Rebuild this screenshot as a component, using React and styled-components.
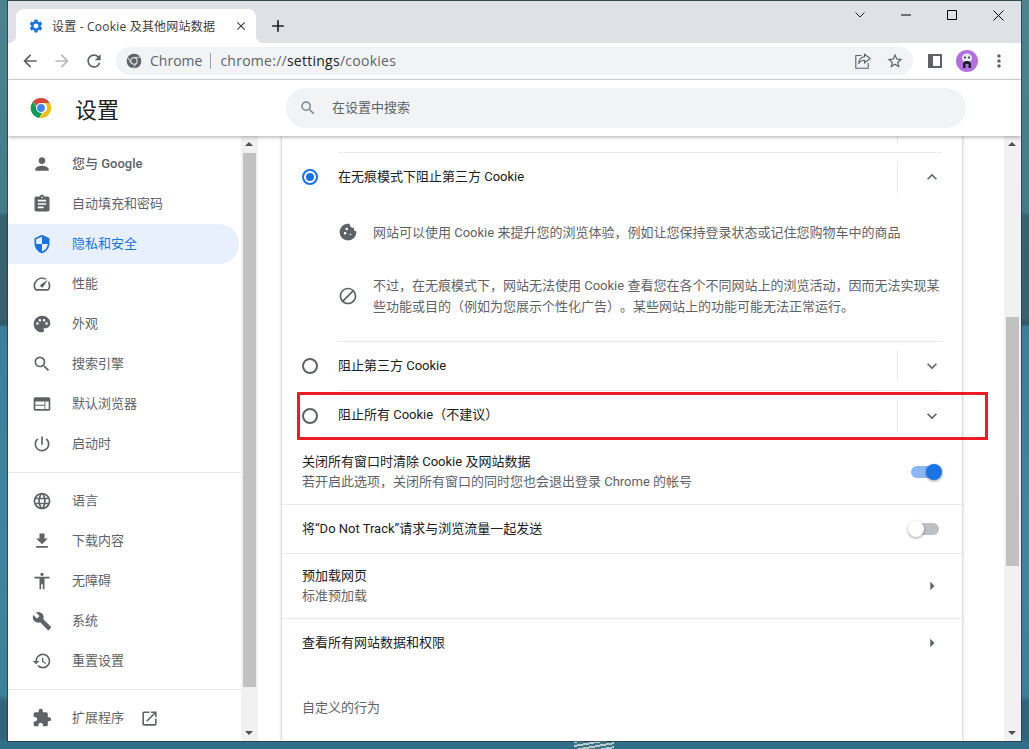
import React from "react";
import styled, { createGlobalStyle } from "styled-components";
import {
  MdPerson, MdAssignment, MdSecurity, MdSpeed, MdPalette, MdSearch, MdWeb,
  MdPowerSettingsNew, MdLanguage, MdFileDownload, MdAccessibility, MdBuild, MdRestore,
  MdExtension, MdOpenInNew, MdBlock, MdCookie, MdExpandLess, MdExpandMore, MdArrowRight,
  MdSettings, MdClose, MdAdd, MdArrowBack, MdArrowForward, MdRefresh, MdStarBorder, MdMoreVert,
} from "react-icons/md";

const Global = createGlobalStyle`
  html, body { margin: 0; padding: 0; height: 749px; overflow: hidden; }
  body {
    font-family: Roboto, "Noto Sans CJK SC", sans-serif;
    font-size: 13px;
    text-spacing-trim: space-all;
    background:
      repeating-linear-gradient(170deg, #b9cdd0 0 2px, #3f7488 2px 4px) 574px 741px / 40px 8px no-repeat,
      linear-gradient(180deg, #4b8491 0, #427c8b 212px, #37616f 216px, #38606f 318px, #2f5766 324px, #3b7f9b 327px, #40849f 560px, #3c8099 695px, #2f6479 702px, #2f6479 738px, #2f6f89 741px, #2f6f89 749px);
  }
  #root { height: 749px; }
`;

const Page = styled.div`
  padding: 1px 8px 8px;
  height: 749px;
  box-sizing: border-box;
`;
const Win = styled.div`
  position: relative;
  height: 740px;
  display: flex;
  flex-direction: column;
  background: #fff;
  overflow: hidden;
  box-shadow: 0 0 0 1px rgba(40, 55, 62, 0.75);
`;
const TabStrip = styled.div`
  height: 42px;
  flex: none;
  background: #dee1e6;
  display: flex;
  align-items: flex-end;
  padding-left: 8px;
`;
const Tab = styled.div`
  position: relative;
  width: 240px;
  height: 34px;
  box-sizing: border-box;
  background: #fff;
  border-radius: 8px 8px 0 0;
  display: flex;
  align-items: center;
  padding: 0 8px 0 12px;
  color: #3c4043;
  font-family: "Open Sans", "Noto Sans CJK SC", sans-serif;
  font-size: 12px;
  &::before, &::after {
    content: "";
    position: absolute;
    bottom: 0;
    width: 8px;
    height: 8px;
  }
  &::before { left: -8px; background: radial-gradient(circle at 0 0, transparent 8px, #fff 8.5px); }
  &::after { right: -8px; background: radial-gradient(circle at 100% 0, transparent 8px, #fff 8.5px); }
`;
const TabIcon = styled(MdSettings)`
  width: 16px;
  height: 16px;
  color: #1a73e8;
  flex: none;
  margin-right: 8px;
`;
const TabTitle = styled.span`
  flex: 1;
  white-space: nowrap;
  overflow: hidden;
  letter-spacing: 0.2px;
`;
const TabClose = styled(MdClose)`
  width: 14px;
  height: 14px;
  color: #3c4043;
  flex: none;
`;
const NewTab = styled(MdAdd)`
  width: 20px;
  height: 20px;
  color: #202124;
  margin: 0 0 7px 12px;
  flex: none;
`;
const WinControls = styled.div`
  margin-left: auto;
  align-self: flex-start;
  display: flex;
  height: 28px;
  align-items: center;
`;
const WinButton = styled.div`
  width: 46px;
  height: 28px;
  display: flex;
  align-items: center;
  justify-content: center;
  svg { display: block; }
`;
const Toolbar = styled.div`
  height: 37px;
  flex: none;
  display: flex;
  align-items: center;
  box-sizing: border-box;
  border-bottom: 1px solid #dadce0;
  padding: 0 6px;
`;
const NavButton = styled.div`
  width: 32px;
  height: 28px;
  display: flex;
  align-items: center;
  justify-content: center;
  color: ${(p) => (p.$dim ? "#b6b8bb" : "#5f6368")};
  svg { display: block; }
`;
const Omnibox = styled.div`
  flex: 1;
  height: 28px;
  margin: 0 6px;
  border-radius: 14px;
  background: #f1f3f4;
  display: flex;
  align-items: center;
  padding: 0 2px 0 10px;
  font-family: "Open Sans", sans-serif;
  font-size: 14px;
  color: #5f6368;
`;
const OmniLabel = styled.span`
  margin-left: 8px;
  padding-bottom: 2px;
`;
const OmniSep = styled.span`
  width: 1px;
  height: 16px;
  background: #9aa0a6;
  margin: 0 9px 0 8px;
`;
const Url = styled.span`
  flex: 1;
  padding-bottom: 2px;
  letter-spacing: 0.26px;
  b { font-weight: 400; color: #202124; }
`;
const OmniAction = styled.div`
  width: 32px;
  display: flex;
  justify-content: center;
  color: #5f6368;
  svg { display: block; }
`;
const Header = styled.header`
  position: relative;
  z-index: 2;
  height: 56px;
  flex: none;
  display: flex;
  align-items: center;
  background: #fff;
  box-shadow: 0 1px 4px rgba(60, 64, 67, 0.45);
`;
const Brand = styled.div`
  width: 278px;
  flex: none;
  display: flex;
  align-items: center;
  padding-left: 22px;
  box-sizing: border-box;
`;
const BrandTitle = styled.h1`
  margin: 0 0 0 23px;
  font-size: 22px;
  font-weight: 400;
  color: #202124;
`;
const SearchBox = styled.div`
  width: 680px;
  height: 40px;
  border-radius: 20px;
  background: #f1f3f4;
  display: flex;
  align-items: center;
  padding-left: 13px;
  box-sizing: border-box;
  color: #5f6368;
  svg { width: 18px; height: 18px; color: #80868b; margin-right: 15px; }
`;
const SearchHint = styled.span`
  padding-bottom: 4px;
`;
const Body = styled.div`
  flex: 1;
  display: flex;
  min-height: 0;
`;
const Sidebar = styled.nav`
  width: 233px;
  flex: none;
  padding-top: 8px;
  box-sizing: border-box;
`;
const NavItem = styled.div`
  height: 40px;
  width: 231px;
  box-sizing: border-box;
  display: flex;
  align-items: center;
  padding-left: 24px;
  border-radius: 0 20px 20px 0;
  color: ${(p) => (p.$active ? "#1a73e8" : "#5f6368")};
  background: ${(p) => (p.$active ? "#e8f0fe" : "transparent")};
  font-weight: ${(p) => (p.$bold ? 500 : 400)};
  svg { flex: none; }
`;
const NavLabel = styled.span`
  padding-bottom: 3px;
`;
const NavIcon = styled.span`
  width: 20px;
  height: 20px;
  margin-right: 20px;
  flex: none;
  color: ${(p) => (p.$active ? "#1a73e8" : "#5f6368")};
  svg { width: 20px; height: 20px; display: block; }
`;
const ExternalIcon = styled(MdOpenInNew)`
  width: 19px;
  height: 19px;
  margin-left: 16px;
  color: #5f6368;
`;
const NavRule = styled.div`
  height: 1px;
  background: #e8eaed;
  margin: 8px 0;
`;
const Track = styled.div`
  position: relative;
  width: 17px;
  flex: none;
  background: #f1f1f1;
`;
const Thumb = styled.div`
  width: 13px;
  margin-left: 2px;
  margin-top: ${(p) => p.$top}px;
  height: ${(p) => p.$h}px;
  background: #c1c1c1;
`;
const Arrow = styled.span`
  position: absolute;
  left: 4px;
  width: 0;
  height: 0;
  border-left: 4px solid transparent;
  border-right: 4px solid transparent;
  ${(p) => (p.$up ? "top: 6px; border-bottom: 4px solid #505050;" : "bottom: 6px; border-top: 4px solid #505050;")}
`;
const Main = styled.main`
  flex: 1;
  min-width: 0;
  overflow: hidden;
  padding-left: 24px;
`;
const Card = styled.section`
  width: 680px;
  min-height: 100%;
  background: #fff;
  box-shadow: 0 0 3px rgba(60, 64, 67, 0.45);
`;
const CutTop = styled.div`
  height: 16px;
  margin: 0 20px 0 56px;
  display: flex;
  border-bottom: 1px solid #e8eaed;
  justify-content: flex-end;
`;
const CutSep = styled.span`
  width: 1px;
  height: 8px;
  background: #e8eaed;
  margin-right: 44px;
`;
const RadioRow = styled.div`
  height: ${(p) => p.$h}px;
  margin: 0 20px;
  display: flex;
  align-items: center;
  color: #202124;
`;
const Radio = styled.span`
  width: 16px;
  height: 16px;
  box-sizing: border-box;
  flex: none;
  border-radius: 50%;
  border: 2px solid ${(p) => (p.$on ? "#1a73e8" : "#5f6368")};
  display: flex;
  align-items: center;
  justify-content: center;
  margin-right: 20px;
  &::after {
    content: "";
    width: 8px;
    height: 8px;
    border-radius: 50%;
    background: ${(p) => (p.$on ? "#1a73e8" : "transparent")};
  }
`;
const RowText = styled.span`
  flex: 1;
  padding-bottom: 4px;
`;
const VSep = styled.span`
  width: 1px;
  height: 32px;
  background: #e8eaed;
  flex: none;
`;
const Chevron = styled.span`
  width: 20px;
  height: 20px;
  margin-left: 24px;
  flex: none;
  color: #5f6368;
  svg { width: 20px; height: 20px; display: block; }
`;
const Rule = styled.div`
  height: 1px;
  background: #e8eaed;
  margin-left: 56px;
  margin-right: 20px;
`;
const Detail = styled.div`
  display: flex;
  align-items: center;
  height: ${(p) => p.$h}px;
  margin: ${(p) => p.$m};
  padding-left: 56px;
  padding-right: 20px;
  color: #5f6368;
  line-height: 21px;
`;
const DetailIcon = styled.span`
  width: 20px;
  height: 20px;
  margin-right: 15px;
  flex: none;
  color: #5f6368;
  svg { width: 20px; height: 20px; display: block; }
`;
const Setting = styled.div`
  height: ${(p) => p.$h}px;
  display: flex;
  align-items: center;
  box-sizing: border-box;
  padding: 0 20px;
  border-bottom: ${(p) => (p.$last ? "none" : "1px solid #e8eaed")};
  color: #202124;
`;
const SettingText = styled.div`
  flex: 1;
  line-height: 20px;
`;
const Secondary = styled.div`
  color: #5f6368;
`;
const Toggle = styled.span`
  position: relative;
  width: 28px;
  height: 12px;
  border-radius: 6px;
  flex: none;
  margin-right: 3px;
  background: ${(p) => (p.$on ? "#8ab8f5" : "#bdc1c6")};
  &::after {
    content: "";
    position: absolute;
    top: -2px;
    left: ${(p) => (p.$on ? "15px" : "-3px")};
    width: 16px;
    height: 16px;
    border-radius: 50%;
    background: ${(p) => (p.$on ? "#1a73e8" : "#fff")};
    box-shadow: 0 1px 3px rgba(0, 0, 0, 0.4);
  }
`;
const Caret = styled(MdArrowRight)`
  width: 20px;
  height: 20px;
  color: #5f6368;
`;
const SectionLabel = styled.div`
  padding: 30px 20px 0;
  color: #5f6368;
`;
const Callout = styled.div`
  position: absolute;
  left: 289px;
  top: 391px;
  width: 691px;
  height: 48px;
  box-sizing: border-box;
  border: 3px solid #ed1c24;
  pointer-events: none;
  z-index: 3;
`;

const ChromeLogo = ({ size = 22 }) => (
  <svg width={size} height={size} viewBox="0 0 48 48">
    <path fill="#db4437" d="M24 2a22 22 0 0 1 19 11H24a11 11 0 0 0-10.4 7.4L6.5 9.9A22 22 0 0 1 24 2z" />
    <path fill="#0f9d58" d="M6.5 9.9 17 27.500a11 11 0 0 0 10 7.100L20 45.600A22 22 0 0 1 6.500 9.900z" />
    <path fill="#fbbc05" d="M43 13a22 22 0 0 1-23 32.600L30.500 33a11 11 0 0 0 1-20z" />
    <circle cx="24" cy="24" r="10.500" fill="#fff" />
    <circle cx="24" cy="24" r="8.500" fill="#4285f4" />
  </svg>
);
const ChromeMono = () => (
  <svg width="16" height="16" viewBox="0 0 48 48">
    <circle cx="24" cy="24" r="22" fill="#5f6368" />
    <circle cx="24" cy="24" r="11" fill="#f1f3f4" />
    <circle cx="24" cy="24" r="8" fill="#5f6368" />
    <path d="M24 13h19M15 30 5.500 13.500M31 32 21 46" stroke="#f1f3f4" strokeWidth="2.500" fill="none" />
  </svg>
);
const ShareIcon = () => (
  <svg width="18" height="18" viewBox="0 0 18 18" fill="none" stroke="#5f6368" strokeWidth="1.100">
    <path d="M7.500 3.500H1.800v12.700h12.400V11" />
    <path d="M10.500 2.200 16.300 6.500l-5.800 4.300V8.200C8 8.200 6 9.200 4.700 11.700 5 8 7 5 10.500 4.800z" />
  </svg>
);
const SidePanelIcon = () => (
  <svg width="14" height="14" viewBox="0 0 14 14">
    <path fill="#5f6368" fillRule="evenodd" d="M0 0h14v14H0zM5 2v10h7V2z" />
  </svg>
);
const Avatar = () => (
  <svg width="22" height="22" viewBox="0 0 22 22">
    <circle cx="11" cy="11" r="11" fill="#b36fe0" />
    <ellipse cx="11" cy="8" rx="5" ry="4.500" fill="#e9e9ee" />
    <circle cx="9" cy="7.500" r="1" fill="#222" />
    <circle cx="13" cy="7.500" r="1" fill="#222" />
    <path d="M7 18v-4.500a3 3 0 0 1 3-2.500h2a3 3 0 0 1 3 2.500V18h-2.500v-4h-3v4z" fill="#1e1e22" />
  </svg>
);

const navGroupA = [
  [MdPerson, "您与 Google", true],
  [MdAssignment, "自动填充和密码"],
  [MdSecurity, "隐私和安全", false, true],
  [MdSpeed, "性能"],
  [MdPalette, "外观"],
  [MdSearch, "搜索引擎"],
  [MdWeb, "默认浏览器"],
  [MdPowerSettingsNew, "启动时"],
];
const navGroupB = [
  [MdLanguage, "语言"],
  [MdFileDownload, "下载内容"],
  [MdAccessibility, "无障碍"],
  [MdBuild, "系统"],
  [MdRestore, "重置设置"],
];

const renderNav = ([Icon, label, bold, active]) => (
  <NavItem key={label} $active={active} $bold={bold}>
    <NavIcon $active={active}><Icon /></NavIcon>
    <NavLabel>{label}</NavLabel>
  </NavItem>
);

export default function App() {
  return (
    <>
      <Global />
      <Page>
        <Win>
          <TabStrip>
            <Tab>
              <TabIcon />
              <TabTitle>设置 - Cookie 及其他网站数据</TabTitle>
              <TabClose />
            </Tab>
            <NewTab />
            <WinControls>
              <WinButton>
                <svg width="10" height="6" viewBox="0 0 10 6" fill="none" stroke="#202124"><path d="M.5.500 5 5 9.500.500" /></svg>
              </WinButton>
              <WinButton>
                <svg width="10" height="2" viewBox="0 0 10 2"><path d="M0 1h10" stroke="#000" /></svg>
              </WinButton>
              <WinButton>
                <svg width="10" height="10" viewBox="0 0 10 10" fill="none"><path d="M.5.500h9v9h-9z" stroke="#000" /></svg>
              </WinButton>
              <WinButton>
                <svg width="11" height="11" viewBox="0 0 11 11" fill="none" stroke="#000"><path d="M.5.500l10 10M10.500.500l-10 10" /></svg>
              </WinButton>
            </WinControls>
          </TabStrip>
          <Toolbar>
            <NavButton><MdArrowBack size={20} /></NavButton>
            <NavButton $dim><MdArrowForward size={20} /></NavButton>
            <NavButton><MdRefresh size={20} /></NavButton>
            <Omnibox>
              <ChromeMono />
              <OmniLabel>Chrome</OmniLabel>
              <OmniSep />
              <Url>chrome://<b>settings</b>/cookies</Url>
              <OmniAction><ShareIcon /></OmniAction>
              <OmniAction><MdStarBorder size={18} /></OmniAction>
            </Omnibox>
            <NavButton><SidePanelIcon /></NavButton>
            <NavButton><Avatar /></NavButton>
            <NavButton><MdMoreVert size={20} /></NavButton>
          </Toolbar>
          <Header>
            <Brand>
              <ChromeLogo />
              <BrandTitle>设置</BrandTitle>
            </Brand>
            <SearchBox>
              <MdSearch />
              <SearchHint>在设置中搜索</SearchHint>
            </SearchBox>
          </Header>
          <Body>
            <Sidebar>
              {navGroupA.map(renderNav)}
              <NavRule />
              {navGroupB.map(renderNav)}
              <NavRule />
              <NavItem>
                <NavIcon><MdExtension /></NavIcon>
                <NavLabel>扩展程序</NavLabel>
                <ExternalIcon />
              </NavItem>
            </Sidebar>
            <Track>
              <Arrow $up />
              <Thumb $top={17} $h={534} />
              <Arrow />
            </Track>
            <Main>
              <Card>
                <CutTop><CutSep /></CutTop>
                <RadioRow $h={48}>
                  <Radio $on />
                  <RowText>在无痕模式下阻止第三方 Cookie</RowText>
                  <VSep />
                  <Chevron><MdExpandLess /></Chevron>
                </RadioRow>
                <Detail $h={56} $m="3px 0 4px">
                  <DetailIcon><MdCookie /></DetailIcon>
                  网站可以使用 Cookie 来提升您的浏览体验，例如让您保持登录状态或记住您购物车中的商品
                </Detail>
                <Detail $h={64} $m="0 0 13px">
                  <DetailIcon><MdBlock /></DetailIcon>
                  不过，在无痕模式下，网站无法使用 Cookie 查看您在各个不同网站上的浏览活动，因而无法实现某些功能或目的（例如为您展示个性化广告）。某些网站上的功能可能无法正常运行。
                </Detail>
                <Rule />
                <RadioRow $h={48}>
                  <Radio />
                  <RowText>阻止第三方 Cookie</RowText>
                  <VSep />
                  <Chevron><MdExpandMore /></Chevron>
                </RadioRow>
                <Rule />
                <RadioRow $h={49}>
                  <Radio />
                  <RowText>阻止所有 Cookie（不建议）</RowText>
                  <VSep />
                  <Chevron><MdExpandMore /></Chevron>
                </RadioRow>
                <Setting $h={65}>
                  <SettingText>
                    关闭所有窗口时清除 Cookie 及网站数据
                    <Secondary>若开启此选项，关闭所有窗口的同时您也会退出登录 Chrome 的帐号</Secondary>
                  </SettingText>
                  <Toggle $on />
                </Setting>
                <Setting $h={49}>
                  <SettingText>将“Do Not Track”请求与浏览流量一起发送</SettingText>
                  <Toggle />
                </Setting>
                <Setting $h={65}>
                  <SettingText>
                    预加载网页
                    <Secondary>标准预加载</Secondary>
                  </SettingText>
                  <Caret />
                </Setting>
                <Setting $h={48} $last>
                  <SettingText>查看所有网站数据和权限</SettingText>
                  <Caret />
                </Setting>
                <SectionLabel>自定义的行为</SectionLabel>
              </Card>
            </Main>
            <Track>
              <Arrow $up />
              <Thumb $top={181} $h={249} />
              <Arrow />
            </Track>
          </Body>
          <Callout />
        </Win>
      </Page>
    </>
  );
}
